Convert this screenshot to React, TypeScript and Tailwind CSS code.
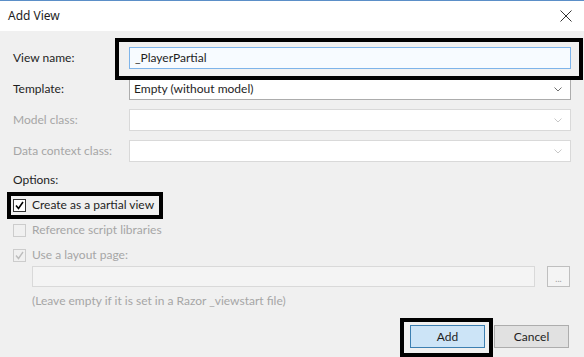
import React from "react";

const font = { fontFamily: 'Lato, "Noto Sans", sans-serif' };
const titleFont = { fontFamily: '"Noto Sans", sans-serif' };

function Chevron({ disabled }: { disabled?: boolean }) {
  return (
    <svg width="8" height="5" viewBox="0 0 8 5" className="shrink-0">
      <path d="M0.5 0.5 L4 4 L7.5 0.5" fill="none" stroke={disabled ? "#c8c8c8" : "#707070"} strokeWidth="1" />
    </svg>
  );
}

function Select({ value, disabled }: { value?: string; disabled?: boolean }) {
  return (
    <div
      className={`flex items-center h-[22px] w-[442px] bg-white border pl-[4px] pr-[8px] ${
        disabled ? "border-[#d9d9d9]" : "border-[#acacac]"
      }`}
    >
      <span className="flex-1 text-[12px] text-[#1e1e1e] leading-none">{value}</span>
      <Chevron disabled={disabled} />
    </div>
  );
}

function Row({ label, disabled, children }: { label: string; disabled?: boolean; children: React.ReactNode }) {
  return (
    <div className="flex items-center h-[22px]">
      <div
        className={`w-[129px] pl-[13px] whitespace-nowrap text-[12px] ${
          disabled ? "text-[#a6a6a6]" : "text-[#1e1e1e]"
        }`}
      >
        {label}
      </div>
      {children}
    </div>
  );
}

export default function App() {
  return (
    <div className="relative w-[584px] h-[357px] bg-[#f0f0f0] overflow-hidden" style={font}>
      {/* title bar */}
      <div className="h-[31px] bg-white border-t border-[#5b8fc8] flex items-center justify-between pl-[8px] pr-[12px]">
        <span className="text-[12px] text-[#1e1e1e]" style={titleFont}>
          Add View
        </span>
        <svg width="12" height="12" viewBox="0 0 12 12">
          <path d="M0.5 0.5 L11.5 11.5 M11.5 0.5 L0.5 11.5" stroke="#333" strokeWidth="1" />
        </svg>
      </div>

      <div className="flex flex-col pt-[16px]">
        <div className="flex flex-col gap-[9px]">
          <Row label="View name:">
            <div className="flex items-center h-[22px] w-[442px] bg-[#f7fbff] border border-[#7eb4ea] pl-[5px]">
              <span className="text-[12px] text-[#1e1e1e]">_PlayerPartial</span>
            </div>
          </Row>
          <Row label="Template:">
            <Select value="Empty (without model)" />
          </Row>
          <Row label="Model class:" disabled>
            <Select disabled />
          </Row>
          <Row label="Data context class:" disabled>
            <Select disabled />
          </Row>
        </div>

        <div className="pl-[13px] mt-[9px] text-[12px] text-[#1e1e1e] h-[18px] leading-[18px]">Options:</div>

        <div className="flex flex-col pl-[13px] mt-[9px] gap-[11px]">
          <div className="flex items-center gap-[6px] h-[14px]">
            <div className="w-[13px] h-[13px] border border-[#333] bg-white flex items-center justify-center">
              <svg width="9" height="9" viewBox="0 0 9 9">
                <path d="M1 4.5 L3.5 7.5 L8 1" fill="none" stroke="#000" strokeWidth="1.6" />
              </svg>
            </div>
            <span className="text-[12px] text-[#1e1e1e]">Create as a partial view</span>
          </div>
          <div className="flex items-center gap-[6px] h-[14px]">
            <div className="w-[13px] h-[13px] border border-[#cccccc] bg-[#f0f0f0]" />
            <span className="text-[12px] text-[#a6a6a6]">Reference script libraries</span>
          </div>
          <div className="flex items-center gap-[6px] h-[14px]">
            <div className="w-[13px] h-[13px] border border-[#cccccc] bg-[#f0f0f0] flex items-center justify-center">
              <svg width="9" height="9" viewBox="0 0 9 9">
                <path d="M1 4.5 L3.5 7.5 L8 1" fill="none" stroke="#bcbcbc" strokeWidth="1.4" />
              </svg>
            </div>
            <span className="text-[12px] text-[#a6a6a6]">Use a layout page:</span>
          </div>
        </div>

        <div className="flex items-center pl-[32px] mt-[4px] gap-[12px]">
          <div className="w-[503px] h-[21px] bg-[#f4f4f4] border border-[#d9d9d9]" />
          <div className="w-[23px] h-[21px] bg-[#f4f4f4] border border-[#bfbfbf] flex items-end justify-center pb-[3px]">
            <span className="text-[9px] leading-none text-[#a0a0a0]">...</span>
          </div>
        </div>

        <div className="pl-[32px] mt-[5px] text-[12px] text-[#a6a6a6] h-[18px] leading-[18px]">
          (Leave empty if it is set in a Razor _viewstart file)
        </div>

        <div className="flex justify-end pr-[15px] mt-[15px] gap-[9px]">
          <div className="w-[75px] h-[23px] bg-[#cce4f7] border border-[#3c7fb1] flex items-center justify-center text-[12px] text-[#1e1e1e]">
            Add
          </div>
          <div className="w-[75px] h-[23px] bg-[#e1e1e1] border border-[#adadad] flex items-center justify-center text-[12px] text-[#1e1e1e]">
            Cancel
          </div>
        </div>
      </div>

      {/* highlight boxes */}
      <div className="absolute left-[115px] top-[38px] w-[468px] h-[42px] border-[4px] border-black" />
      <div className="absolute left-[7px] top-[192px] w-[156px] h-[27px] border-[4px] border-black" />
      <div className="absolute left-[400px] top-[318px] w-[93px] h-[39px] border-[4px] border-black" />
    </div>
  );
}
